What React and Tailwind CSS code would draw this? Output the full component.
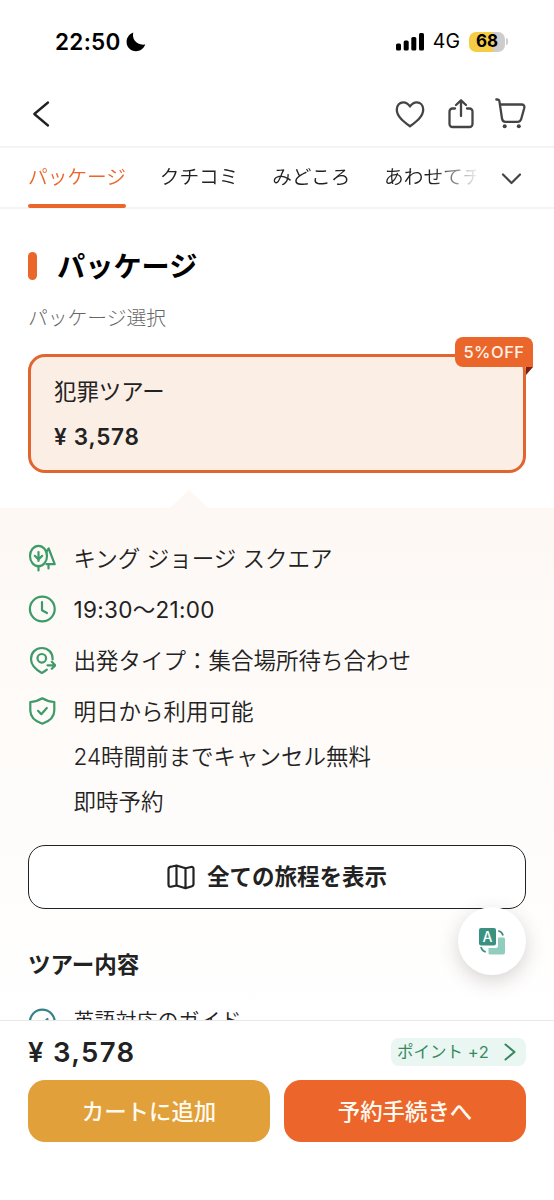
import React from 'react';

const tabs = ['パッケージ', 'クチコミ', 'みどころ', 'あわせてチェック'];

const TreesIcon = () => (
  <svg className="mb-[2px]" width="28" height="28" viewBox="0 0 28 28" fill="none" stroke="currentColor" strokeWidth="2.2" strokeLinecap="round" strokeLinejoin="round">
    <ellipse cx="10.5" cy="12" rx="8.5" ry="10.2" />
    <path d="M10.5 8v9M6.8 11.800l3.700 3.700 3.700-3.700M10.500 22.500v4" />
    <path d="M18.500 7.500L20.700 4.500l6 15.700H18.500M20.500 21v3.500" />
  </svg>
);

const ClockIcon = () => (
  <svg className="mb-[2px]" width="28" height="28" viewBox="0 0 28 28" fill="none" stroke="currentColor" strokeWidth="2.2" strokeLinecap="round" strokeLinejoin="round">
    <circle cx="14.3" cy="14" r="12.4" />
    <path d="M14 7v8.200l5 2.800" />
  </svg>
);

const MeetingIcon = () => (
  <svg className="mb-px" width="28" height="28" viewBox="0 0 28 28" fill="none" stroke="currentColor" strokeWidth="2.2" strokeLinecap="round" strokeLinejoin="round">
    <path d="M24.600 13.500C25 6.500 20 2 13.800 2S3 6.700 3 13c0 6.500 5.500 11 10.800 14 1.800-.9 3.500-2.100 5-3.400" />
    <circle cx="13.8" cy="12.3" r="4.3" />
    <path d="M19.500 19.300h7.500M23.800 15.800l3.500 3.500-3.500 3.500" />
  </svg>
);

const ShieldIcon = () => (
  <svg className="mb-[2px]" width="28" height="28" viewBox="0 0 28 28" fill="none" stroke="currentColor" strokeWidth="2.2" strokeLinecap="round" strokeLinejoin="round">
    <path d="M14.300 1.300c3.500 2.200 7.300 3.500 12 3.700v8.500c0 6.500-4.500 10.700-12 13.200C6.800 24.200 2.300 20 2.300 13.500V5c4.700-.2 8.500-1.500 12-3.700z" />
    <path d="M10 13.800l3.300 3.400 5.500-6.200" />
  </svg>
);

const details = [
  { icon: TreesIcon, text: 'キング ジョージ スクエア' },
  { icon: ClockIcon, text: '19:30〜21:00', numeric: true },
  { icon: MeetingIcon, text: '出発タイプ：集合場所待ち合わせ' },
  { icon: ShieldIcon, text: '明日から利用可能' },
];

const StatusBar = () => (
  <div className="flex h-[83px] shrink-0 items-center justify-between pl-[55px] pr-[46px] text-black">
    <div className="flex items-center gap-[5px]">
      <span className="pt-px text-[22.5px] font-semibold leading-none tracking-[0.3px]">22:50</span>
      <svg width="20" height="20" viewBox="0 0 20 20" fill="currentColor">
        <path d="M7.300.6C5.600 7 10.500 13.800 19.300 12.500 17.500 17 14 19.200 10 19.200 4.700 19.200.6 15.200.6 10 .6 5.700 3.100 2.100 7.300.6z" />
      </svg>
    </div>
    <div className="flex items-center">
      <svg width="28" height="18" viewBox="0 0 28 18" fill="currentColor">
        <rect x="0" y="10.5" width="5" height="7" rx="1.5" />
        <rect x="7.7" y="7.5" width="5" height="10" rx="1.5" />
        <rect x="15.3" y="4" width="5" height="13.5" rx="1.5" />
        <rect x="23" y="0" width="5" height="17.5" rx="1.5" />
      </svg>
      <span className="ml-[9px] pt-px text-[19.5px] leading-none">4G</span>
      <div className="ml-[9px] flex h-[20px] w-[36px] items-center justify-center rounded-[7px] bg-[linear-gradient(90deg,#f4cd45_68%,#cdcdcd_68%)] text-[17px] font-bold leading-none">
        68
      </div>
      <div className="ml-[1px] h-[7px] w-[2px] rounded-r-full bg-[#cdcdcd]" />
    </div>
  </div>
);

const Header = () => (
  <div className="flex h-[65px] shrink-0 items-center justify-between border-b-2 border-[#f4f4f4] pb-[2px] pl-[32px] pr-[28px] text-[#444]">
    <svg width="18" height="28" viewBox="0 0 18 28" fill="none" stroke="#222" strokeWidth="2.3" strokeLinecap="round" strokeLinejoin="round">
      <path d="M16 2.500L2.300 14 16 25.500" />
    </svg>
    <div className="flex items-center">
      <svg width="30" height="30" viewBox="0 0 30 30" fill="none" stroke="currentColor" strokeWidth="2.3" strokeLinejoin="round">
        <path d="M15 27.300C8.500 22.500 1.800 17.500 1.800 10.500 1.800 6 4.800 3.300 8.300 3.300c3 0 5 1.500 6.700 4.200 1.700-2.700 3.700-4.200 6.700-4.200 3.500 0 6.500 2.700 6.500 7.200 0 7-6.700 12-13.200 16.800z" />
      </svg>
      <svg className="ml-[21px]" width="30" height="30" viewBox="0 0 30 30" fill="none" stroke="currentColor" strokeWidth="2.3" strokeLinecap="round" strokeLinejoin="round">
        <path d="M9 9.500H6.500a3 3 0 0 0-3 3V25a3 3 0 0 0 3 3h17a3 3 0 0 0 3-3V12.500a3 3 0 0 0-3-3H21" />
        <path d="M15 17V1.500M10 6l5-4.700L20 6" />
      </svg>
      <svg className="ml-[19px]" width="31" height="31" viewBox="0 0 31 31" fill="none" stroke="currentColor" strokeWidth="2.3" strokeLinecap="round" strokeLinejoin="round">
        <path d="M1.300 1.500h1.200c1 0 1.700.6 1.900 1.600L7 20.500c.3 2.300 1.500 3.300 3.500 3.300h12c2 0 3.200-1 3.700-2.800l3-10.800c.6-2.500-.5-3.700-2.700-3.700H5" />
        <circle cx="9.7" cy="28.3" r="2" fill="currentColor" stroke="none" />
        <circle cx="23.8" cy="28.3" r="2" fill="currentColor" stroke="none" />
      </svg>
    </div>
  </div>
);

const TabBar = () => (
  <div className="flex h-[61px] shrink-0 border-b-2 border-[#f4f4f4] pl-7">
    <div className="-mb-px flex w-[448px] gap-[33.7px] overflow-hidden whitespace-nowrap text-[19.7px] font-[350] [mask-image:linear-gradient(90deg,#000_405px,#0000_452px)]">
      {tabs.map((tab, i) => (
        <div
          key={tab}
          className={i === 0 ? 'relative h-[60px] shrink-0 leading-[59px] text-[#eb662b]' : 'h-[60px] shrink-0 leading-[59px] text-[#222]'}
        >
          {tab}
          {i === 0 && <div className="absolute inset-x-0 bottom-0 h-[4px] rounded-[2px] bg-[#eb662b]" />}
        </div>
      ))}
    </div>
    <svg className="ml-[25px] mt-[24px]" width="20" height="13" viewBox="0 0 20 13" fill="none" stroke="#444" strokeWidth="2.2" strokeLinecap="round" strokeLinejoin="round">
      <path d="M2 2.500L10.500 11 19 2.500" />
    </svg>
  </div>
);

const PackageCard = () => (
  <div className="relative mt-[22px] h-[119px] rounded-[17px] border-[3px] border-[#e0652f] bg-[#fbeee5] pl-[23px] pt-[19px] text-[#222]">
    <p className="text-[22.4px] leading-[32px]">犯罪ツアー</p>
    <p className="mt-[13px] text-[22.5px] font-semibold leading-[32px] tracking-[0.75px]">¥ 3,578</p>
    <div className="absolute -right-[10px] -top-[20px] flex h-[30px] w-[78px] items-center justify-center rounded-[8px] rounded-br-none bg-[#eb662b] pt-px text-[16.5px] font-medium tracking-[0.5px] text-[#fff3e9]">
      5%OFF
    </div>
    <div className="absolute -right-[10px] top-[10px] h-[8px] w-[7px] bg-[#7c1f0f] [clip-path:polygon(0_0,100%_0,0_100%)]" />
  </div>
);

const TranslateButton = () => (
  <button type="button" className="absolute bottom-[225px] right-[28px] flex h-[68px] w-[68px] items-center justify-center rounded-full bg-white shadow-[0_6px_20px_rgba(60,40,40,0.2)]">
    <div className="relative h-[27px] w-[26px]">
      <svg width="26" height="27" viewBox="0 0 26 27" fill="none">
        <path d="M19 9.500h5.500a1.500 1.500 0 0 1 1.500 1.500v13.500a2 2 0 0 1-2 2H11a1.500 1.500 0 0 1-1.500-1.500v-5H17a2 2 0 0 0 2-2z" fill="#91cdbf" />
        <rect x="0" y="0" width="17" height="17.5" rx="2" fill="#3a9180" />
        <path d="M19.300 2.800c2.600.5 4 2 4.700 4.700M2 19c.7 2.800 2.200 4.300 4.800 4.800" stroke="#3a9180" strokeWidth="1.8" />
      </svg>
      <span className="absolute left-0 top-0 w-[17px] text-center text-[14px] font-medium leading-[18px] text-white">A</span>
    </div>
  </button>
);

const BottomBar = () => (
  <div className="h-[180px] shrink-0 border-t-[1.5px] border-[#e8e8e8] bg-white px-7 pt-[17px]">
    <div className="flex h-[28px] items-center justify-between">
      <span className="pt-[2px] text-[27.5px] font-semibold leading-none tracking-[1.3px] text-[#222]">¥ 3,578</span>
      <div className="flex h-[28px] w-[135px] items-center justify-between rounded-[8px] bg-[#e9f6f1] pl-[6px] pr-[10px] text-[16.5px] text-[#37885f]">
        <span className="whitespace-nowrap">
          ポイント <span className="tracking-[0.8px]">+2</span>
        </span>
        <svg width="12" height="18" viewBox="0 0 12 18" fill="none" stroke="currentColor" strokeWidth="2" strokeLinecap="round" strokeLinejoin="round">
          <path d="M1.500 1.500L10.500 9l-9 7.500" />
        </svg>
      </div>
    </div>
    <div className="mt-[14px] flex gap-[14px] text-[22.4px] font-medium text-[#fffaf0]">
      <button type="button" className="h-[62px] flex-1 rounded-[17px] bg-[#e1a03a] pt-px">カートに追加</button>
      <button type="button" className="h-[62px] flex-1 rounded-[17px] bg-[#ec652b] pt-px">予約手続きへ</button>
    </div>
  </div>
);

const App = () => (
  <div className="relative flex h-[1200px] w-[554px] flex-col overflow-hidden bg-white font-[Inter,'Noto_Sans_CJK_JP',sans-serif]">
    <StatusBar />
    <Header />
    <TabBar />
    <main className="min-h-0 flex-1 overflow-hidden">
      <section className="h-[281px] px-7 pt-[39px]">
        <div className="flex h-[36px] items-center gap-5">
          <div className="h-[28px] w-[9px] rounded-full bg-[#eb662b]" />
          <h2 className="pt-[2px] text-[28.2px] font-bold leading-none text-black">パッケージ</h2>
        </div>
        <p className="mt-[20px] text-[19.8px] font-light leading-[28px] text-[#666]">パッケージ選択</p>
        <PackageCard />
      </section>
      <div className="ml-[170px] h-[18px] w-[38px] bg-[#fdf8f4] [clip-path:polygon(50%_0,100%_100%,0_100%)]" />
      <section className="h-[520px] bg-gradient-to-b from-[#fdf8f4] to-white px-7 pt-[25px] text-[22.5px] text-[#222]">
        {details.map(({ icon: Icon, text, numeric }) => (
          <div key={text} className="flex h-[51px] items-center text-[#3c9b68]">
            <Icon />
            <span
              className={
                numeric
                  ? 'ml-[17.5px] whitespace-nowrap tracking-[0.3px] text-[#222]'
                  : 'ml-[17.5px] whitespace-nowrap font-[350] text-[#222]'
              }
            >
              {text}
            </span>
          </div>
        ))}
        <div className="-mt-[3px] pl-[45.5px] font-[350] leading-[45px]">
          <p>24時間前までキャンセル無料</p>
          <p>即時予約</p>
        </div>
        <button type="button" className="mt-[21px] flex h-[64px] w-full items-center justify-center gap-3 rounded-[17px] border-[1.5px] border-[#222] bg-white font-bold">
          <svg width="28" height="26" viewBox="0 0 28 26" fill="none" stroke="currentColor" strokeWidth="2.2" strokeLinejoin="round">
            <path d="M1.500 5.500Q1.500 3 4 2.700L9.500 1.500 18.500 4.300 24 3Q26.500 2.500 26.500 5V20Q26.500 22 24.300 22.500L18.500 24.300 9.500 21.500 4 22.700Q1.500 23 1.500 20.500zM9.500 1.500v20M18.500 4.300v20" />
          </svg>
          全ての旅程を表示
        </button>
        <h3 className="mt-[40px] text-[22.5px] font-bold leading-[32px]">ツアー内容</h3>
        <div className="mt-[24px] flex h-[34px] items-center">
          <svg width="28" height="28" viewBox="0 0 28 28" fill="none" stroke="#348288" strokeWidth="2.2" strokeLinecap="round">
            <circle cx="14.3" cy="14" r="12.4" />
            <path d="M9 14l3.500 4 7-7" />
          </svg>
          <span className="ml-[17.5px] pb-[3px] text-[21px] font-[350] leading-none">英語対応のガイド</span>
        </div>
      </section>
    </main>
    <BottomBar />
    <TranslateButton />
  </div>
);

export default App;
